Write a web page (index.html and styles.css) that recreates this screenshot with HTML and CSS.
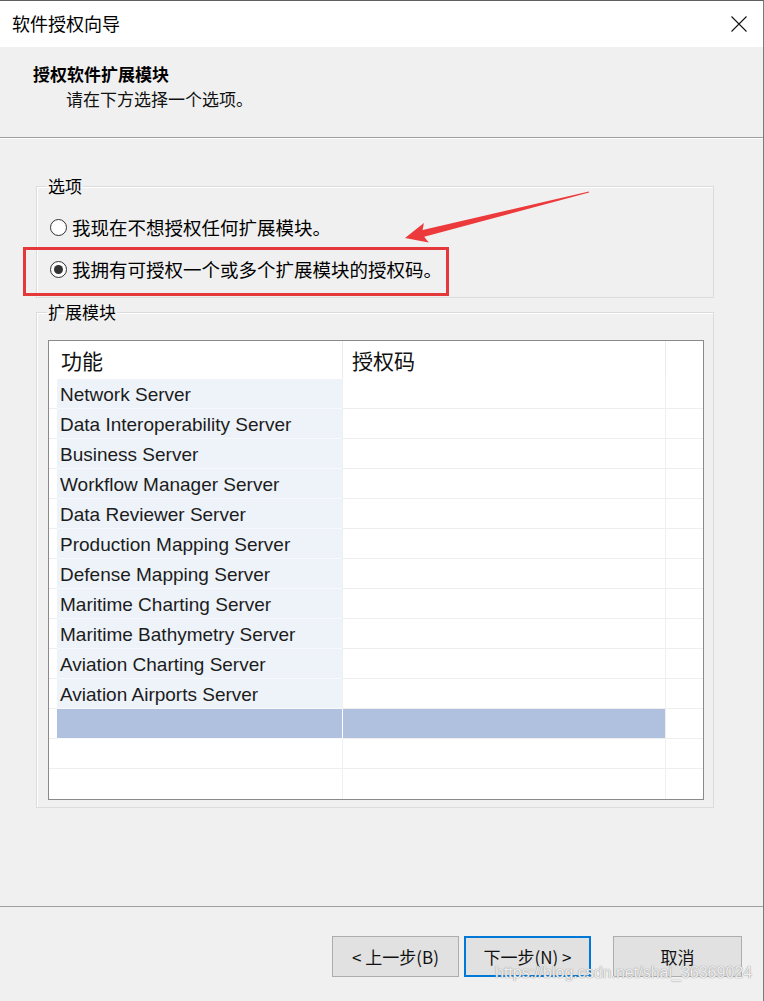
FILE: index.html
```html
<html>
  <head>
    <title>软件授权向导</title>
    <link rel="stylesheet" href="styles.css">
  </head>
  <body>
    <div class="window">
      <!-- title bar -->
      <div class="titlebar">
        <span class="title">软件授权向导</span>
        <svg class="close" width="16" height="16" viewBox="0 0 16 16">
          <path d="M0.5 0.5 L15.5 15.5 M15.5 0.5 L0.5 15.5" stroke="#111" stroke-width="1.1" fill="none"/>
        </svg>
      </div>

      <!-- page header -->
      <div class="header">
        <div class="header-title">授权软件扩展模块</div>
        <div class="header-sub">请在下方选择一个选项。</div>
      </div>

      <div class="main">
        <fieldset class="group options">
          <legend>选项</legend>
          <label class="option">
            <span class="radio"></span>
            <span>我现在不想授权任何扩展模块。</span>
          </label>
          <label class="option">
            <span class="radio checked"></span>
            <span>我拥有可授权一个或多个扩展模块的授权码。</span>
          </label>
          <!-- annotation -->
          <div class="mark-box"></div>
          <svg class="mark-arrow" width="764" height="260" viewBox="0 0 764 260">
            <polygon points="405,239 423.9,224 422.6,231 588.9,192.4 589.1,193.6 424.2,237.8 428.7,243.4" fill="#ec3a3c"/>
          </svg>
        </fieldset>

        <fieldset class="group modules">
          <legend>扩展模块</legend>
          <table class="grid">
            <colgroup>
              <col style="width: 8px">
              <col style="width: 285px">
              <col style="width: 323px">
              <col style="width: 38px">
            </colgroup>
            <thead>
              <tr>
                <th colspan="2" class="h-name">功能</th>
                <th class="h-code">授权码</th>
                <th class="h-end"></th>
              </tr>
            </thead>
            <tbody id="rows"></tbody>
          </table>
        </fieldset>
      </div>

      <div class="footer">
        <button class="btn">&lt; 上一步(B)</button>
        <button class="btn default">下一步(N) &gt;</button>
        <button class="btn cancel">取消</button>
        <span class="watermark">https://blog.csdn.net/shai_36369024</span>
      </div>
    </div>

    <script>
      // fill the extension list, then pad with the selected blank row and empties
      const modules = [
        'Network Server', 'Data Interoperability Server', 'Business Server',
        'Workflow Manager Server', 'Data Reviewer Server', 'Production Mapping Server',
        'Defense Mapping Server', 'Maritime Charting Server', 'Maritime Bathymetry Server',
        'Aviation Charting Server', 'Aviation Airports Server'
      ];
      const body = document.getElementById('rows');

      const addRow = (name, cls) => {
        const row = body.insertRow(-1);
        if (cls) row.className = cls;
        ['lead', 'name', 'code', 'end'].forEach(c => {
          const cell = row.insertCell(-1);
          cell.className = c;
          if (c === 'name') cell.textContent = name;
        });
      };

      modules.forEach(m => addRow(m));
      addRow('', 'selected');
      addRow('', 'empty');
      addRow('', 'empty');
    </script>
  </body>
</html>
```

FILE: styles.css
```css
body {
  margin: 0;
  background-color: #f0f0f0;
  font-family: "Noto Sans CJK SC", "Liberation Sans", sans-serif;
  color: #000000;
}
.window {
  width: 764px;
  height: 1001px;
  box-sizing: border-box;
  border-top: 1px solid #5f5f5f;
  border-right: 1px solid #7a7a7a;
  background-color: #f0f0f0;
  display: flex;
  flex-direction: column;
  position: relative;
  overflow: hidden;
}
.titlebar {
  height: 46px;
  background-color: #ffffff;
  display: flex;
  align-items: center;
  justify-content: space-between;
  padding: 0 16px 0 12px;
}
.title {
  font-size: 18px;
  margin-top: -3px;
}
.close {
  margin-top: 0;
}
.header {
  height: 91px;
  box-sizing: border-box;
  padding: 16px 0 0 33px;
  border-bottom: 1px solid #a0a0a0;
  box-shadow: 0 1px 0 #ffffff;
}
.header-title {
  font-size: 17px;
  font-weight: bold;
  line-height: 22px;
}
.header-sub {
  font-size: 17px;
  line-height: 22px;
  margin: 3px 0 0 33px;
  color: #111111;
}
.main {
  height: 769px;
  box-sizing: border-box;
  padding: 38px 49px 0 36px;
  border-bottom: 1px solid #a0a0a0;
}
.group {
  margin: 0;
  border: 1px solid #dcdcdc;
  box-shadow: inset 1px 1px 0 #ffffff;
  padding: 0 8px 7px 11px;
}
.group legend {
  font-size: 17px;
  line-height: 20px;
  padding: 0 1px;
  margin-left: -1px;
}
.options {
  position: relative;
  height: 122px;
  box-sizing: border-box;
  padding-top: 10px;
}
.option {
  display: flex;
  align-items: center;
  height: 42px;
  margin-left: 2px;
  font-size: 18.5px;
}
.radio {
  width: 15px;
  height: 15px;
  border: 1px solid #333333;
  border-radius: 50%;
  background-color: #ffffff;
  margin-right: 5px;
  display: flex;
  align-items: center;
  justify-content: center;
}
.radio.checked::after {
  content: "";
  width: 9px;
  height: 9px;
  border-radius: 50%;
  background-color: #333333;
}
.mark-box {
  position: absolute;
  left: -14px;
  top: 51px;
  width: 426px;
  height: 49px;
  box-sizing: border-box;
  border: 3px solid #e5383b;
}
.mark-arrow {
  position: absolute;
  left: -37px;
  top: -197px;
  pointer-events: none;
}
.modules {
  margin-top: 4px;
  padding-top: 18px;
}
.grid {
  table-layout: fixed;
  width: 656px;
  border-collapse: separate;
  border-spacing: 0;
  border: 1px solid #8a8a8a;
  background-color: #ffffff;
  font-family: "Liberation Sans", Arial, sans-serif;
}
.grid th {
  height: 38px;
  padding: 0;
  font-family: "Noto Sans CJK SC", sans-serif;
  font-size: 21px;
  font-weight: normal;
  text-align: left;
  color: #111111;
}
.grid .h-name {
  padding-left: 12px;
}
.grid .h-code {
  padding-left: 9px;
  border-left: 1px solid #ececec;
}
.grid .h-end {
  border-left: 1px solid #ececec;
}
.grid tr {
  height: 30px;
}
.grid td {
  padding: 3px 0 0 0;
  border-bottom: 1px solid #eeeeee;
  font-size: 19px;
  line-height: 26px;
  color: #1c1c1c;
  white-space: nowrap;
}
.grid tbody tr:last-child td {
  border-bottom: none;
}
.grid td.name {
  background-color: #eef3f9;
  border-bottom-color: #f7f9fc;
  padding-left: 3px;
}
.grid td.code, .grid td.end {
  border-left: 1px solid #f0f0f0;
}
.grid tr.selected td.name, .grid tr.selected td.code {
  background-color: #b0c1df;
}
.grid tr.selected td.code {
  border-left-color: #ffffff;
}
.grid tr.empty td.name {
  background-color: #ffffff;
  border-bottom-color: #eeeeee;
}
.footer {
  flex: 1;
  position: relative;
  display: flex;
  justify-content: flex-end;
  align-items: flex-start;
  padding: 29px 21px 0 0;
}
.btn {
  height: 41px;
  width: 127px;
  margin-left: 5px;
  background-color: #e1e1e1;
  border: 1px solid #adadad;
  font-family: "Noto Sans CJK SC", sans-serif;
  font-size: 17px;
  line-height: 18px;
  color: #111111;
  padding: 0;
}
.btn.default {
  border: 2px solid #0078d7;
}
.btn.cancel {
  width: 129px;
  margin-left: 22px;
}
.watermark {
  position: absolute;
  left: 495px;
  top: 58px;
  font-family: "Liberation Sans", Arial, sans-serif;
  font-size: 16px;
  line-height: 16px;
  color: rgba(255, 255, 255, 0.85);
  text-shadow: 0 0 1px #9a9a9a, 0 0 1px #9a9a9a;
}
```
